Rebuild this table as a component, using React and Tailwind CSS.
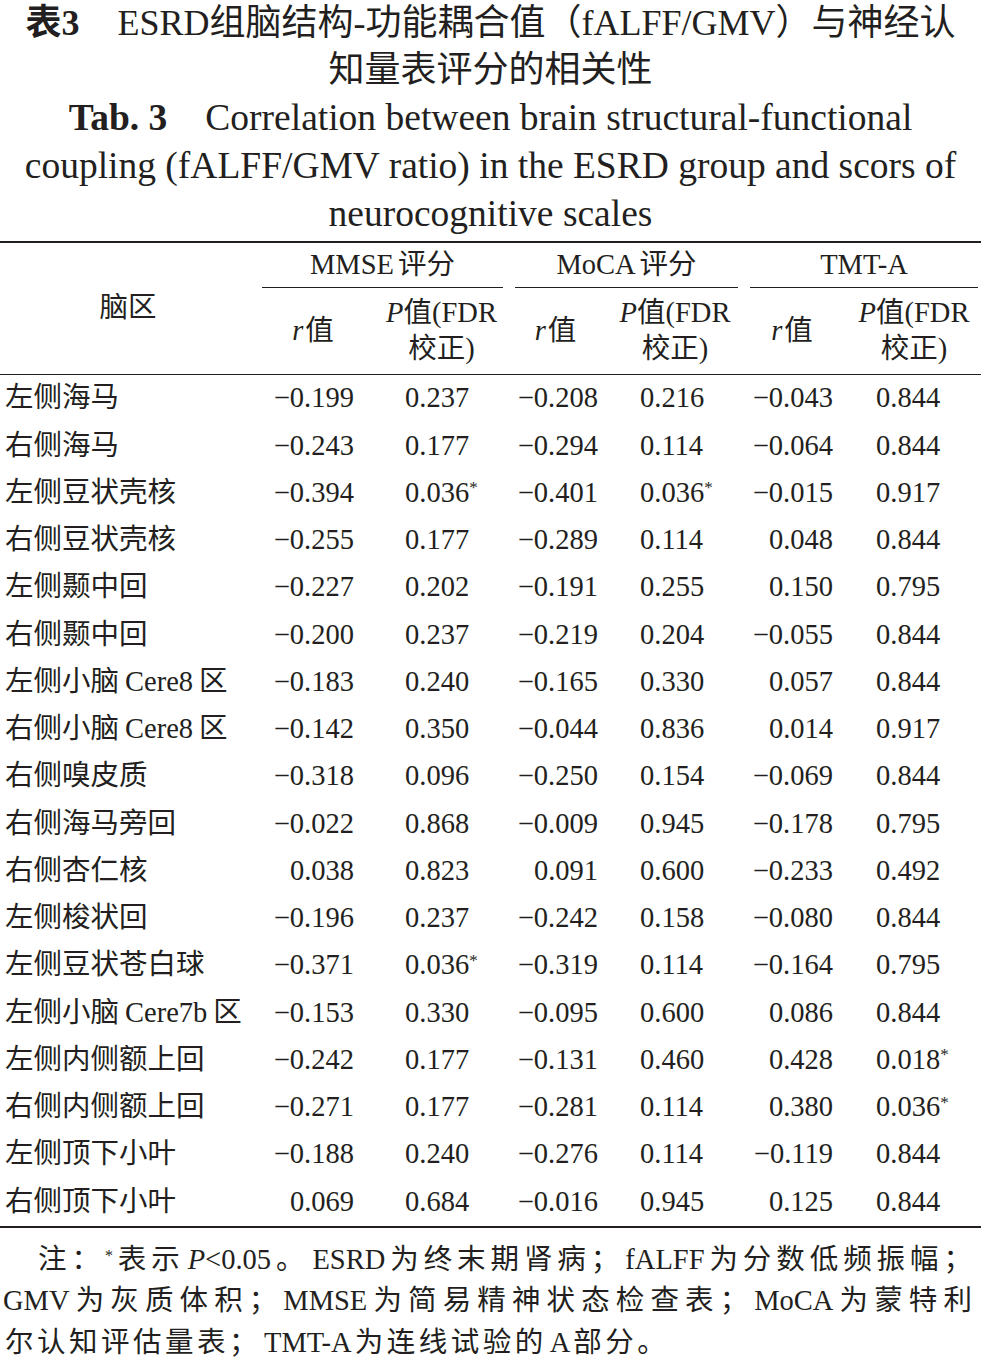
import React from 'react';

const rows = [
    ['左侧海马', '−0.199', '0.237', '', '−0.208', '0.216', '', '−0.043', '0.844', ''],
    ['右侧海马', '−0.243', '0.177', '', '−0.294', '0.114', '', '−0.064', '0.844', ''],
    ['左侧豆状壳核', '−0.394', '0.036', '*', '−0.401', '0.036', '*', '−0.015', '0.917', ''],
    ['右侧豆状壳核', '−0.255', '0.177', '', '−0.289', '0.114', '', '0.048', '0.844', ''],
    ['左侧颞中回', '−0.227', '0.202', '', '−0.191', '0.255', '', '0.150', '0.795', ''],
    ['右侧颞中回', '−0.200', '0.237', '', '−0.219', '0.204', '', '−0.055', '0.844', ''],
    ['左侧小脑|Cere8|区', '−0.183', '0.240', '', '−0.165', '0.330', '', '0.057', '0.844', ''],
    ['右侧小脑|Cere8|区', '−0.142', '0.350', '', '−0.044', '0.836', '', '0.014', '0.917', ''],
    ['右侧嗅皮质', '−0.318', '0.096', '', '−0.250', '0.154', '', '−0.069', '0.844', ''],
    ['右侧海马旁回', '−0.022', '0.868', '', '−0.009', '0.945', '', '−0.178', '0.795', ''],
    ['右侧杏仁核', '0.038', '0.823', '', '0.091', '0.600', '', '−0.233', '0.492', ''],
    ['左侧梭状回', '−0.196', '0.237', '', '−0.242', '0.158', '', '−0.080', '0.844', ''],
    ['左侧豆状苍白球', '−0.371', '0.036', '*', '−0.319', '0.114', '', '−0.164', '0.795', ''],
    ['左侧小脑|Cere7b|区', '−0.153', '0.330', '', '−0.095', '0.600', '', '0.086', '0.844', ''],
    ['左侧内侧额上回', '−0.242', '0.177', '', '−0.131', '0.460', '', '0.428', '0.018', '*'],
    ['右侧内侧额上回', '−0.271', '0.177', '', '−0.281', '0.114', '', '0.380', '0.036', '*'],
    ['左侧顶下小叶', '−0.188', '0.240', '', '−0.276', '0.114', '', '−0.119', '0.844', ''],
    ['右侧顶下小叶', '0.069', '0.684', '', '−0.016', '0.945', '', '0.125', '0.844', ''],
];

// label may carry a latin part between pipes, set a little apart
const Label = ({ text }) => {
    const parts = text.split('|');
    if (parts.length === 1) return <span>{text}</span>;
    return (
        <span>
            {parts[0]}
            <span className="mx-[6px]">{parts[1]}</span>
            {parts[2]}
        </span>
    );
};

const Star = ({ show }) => (show ? <sup className="text-[17px]">*</sup> : null);

const PHead = () => (
    <div className="flex flex-col items-center justify-center leading-[36px] whitespace-nowrap">
        <span>
            <i>P</i>值(FDR
        </span>
        <span>校正)</span>
    </div>
);

const RHead = () => (
    <div className="flex items-center justify-center pr-[16px] whitespace-nowrap">
        <i className="mr-[2px]">r</i>值
    </div>
);

// latin runs in the notes keep normal spacing
const L = ({ children }) => <span className="tracking-normal mx-[3px]">{children}</span>;

export default function App() {
    return (
        <div
            lang="zh-CN"
            className="w-[981px] bg-white text-[#231f20] font-['Liberation_Serif','Noto_Sans_CJK_SC',serif]"
        >
            {/* Chinese caption */}
            <div className="text-center text-[36px] leading-[47px]">
                <div>
                    <span className="font-bold">表3</span>
                    <span className="ml-[38px]">ESRD组脑结构-功能耦合值（fALFF/GMV）与神经认</span>
                </div>
                <div>知量表评分的相关性</div>
            </div>

            {/* English caption */}
            <div className="text-center text-[37.5px] leading-[48px]">
                <div>
                    <span className="font-bold">Tab. 3</span>
                    <span className="ml-[38px]">Correlation between brain structural-functional</span>
                </div>
                <div>coupling (fALFF/GMV ratio) in the ESRD group and scors of</div>
                <div>neurocognitive scales</div>
            </div>

            {/* Table */}
            <div className="mt-[3px] border-t-2 border-[#231f20] text-[28.5px]">
                <div className="grid grid-cols-[262px_118px_123px_12px_97px_126px_12px_100px_128px] grid-rows-[45px_86px] border-b-[1.5px] border-[#231f20]">
                    <div className="row-span-2 flex items-center justify-center pr-[6px]">脑区</div>
                    <div className="col-span-2 flex items-center justify-center border-b border-[#231f20]">
                        MMSE<span className="ml-[4px]">评分</span>
                    </div>
                    <div></div>
                    <div className="col-span-2 flex items-center justify-center border-b border-[#231f20]">
                        MoCA<span className="ml-[4px]">评分</span>
                    </div>
                    <div></div>
                    <div className="col-span-2 flex items-center justify-center border-b border-[#231f20]">TMT-A</div>

                    <RHead />
                    <PHead />
                    <div></div>
                    <RHead />
                    <PHead />
                    <div></div>
                    <RHead />
                    <PHead />
                </div>

                <div className="border-b-2 border-[#231f20]">
                    {rows.map((r, i) => (
                        <div
                            key={i}
                            className="grid grid-cols-[262px_118px_123px_12px_97px_126px_12px_100px_128px] h-[47.25px] items-center whitespace-nowrap"
                        >
                            <div className="pl-[5px]">
                                <Label text={r[0]} />
                            </div>
                            <div className="text-right pr-[26px]">{r[1]}</div>
                            <div className="pl-[25px]">
                                {r[2]}
                                <Star show={r[3]} />
                            </div>
                            <div></div>
                            <div className="text-right pr-[14px]">{r[4]}</div>
                            <div className="pl-[28px]">
                                {r[5]}
                                <Star show={r[6]} />
                            </div>
                            <div></div>
                            <div className="text-right pr-[17px]">{r[7]}</div>
                            <div className="pl-[26px]">
                                {r[8]}
                                <Star show={r[9]} />
                            </div>
                        </div>
                    ))}
                </div>
            </div>

            {/* Notes */}
            <div className="pt-[11px] pr-[6px] text-[28.5px] leading-[41.5px] tracking-[3px]">
                <div className="pl-[38px] text-justify [text-align-last:justify]">
                    注：<sup className="text-[16px]">*</sup>表示<L><i>P</i>&lt;0.05</L>。<L>ESRD</L>为终末期肾病；<L>fALFF</L>为分数低频振幅；
                </div>
                <div className="text-justify [text-align-last:justify]">
                    <L>GMV</L>为灰质体积；<L>MMSE</L>为简易精神状态检查表；<L>MoCA</L>为蒙特利
                </div>
                <div className="pl-[5px] tracking-[3.5px]">
                    尔认知评估量表；<L>TMT-A</L>为连线试验的<L>A</L>部分。
                </div>
            </div>
        </div>
    );
}
